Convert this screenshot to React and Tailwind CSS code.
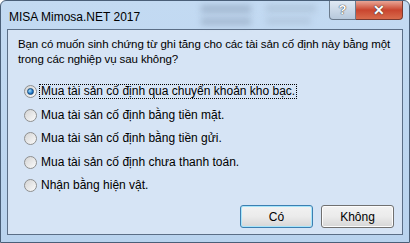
const options = [
  "Mua tài sản cố định qua chuyển khoản kho bạc.",
  "Mua tài sản cố định bằng tiền mặt.",
  "Mua tài sản cố định bằng tiền gửi.",
  "Mua tài sản cố định chưa thanh toán.",
  "Nhận bằng hiện vật.",
];

function Radio({ checked }) {
  return (
    <span className="w-[13px] h-[13px] rounded-full border border-[#8e8f8f] bg-gradient-to-br from-[#d4d4d4] to-[#fbfbfb] flex items-center justify-center shrink-0">
      {checked && (
        <span className="w-[7px] h-[7px] rounded-full bg-[radial-gradient(circle_at_35%_35%,#a6e2ff,#1f76c6_60%,#0b3f85)] border border-[#174b7d]" />
      )}
    </span>
  );
}

function Button({ children, focused }) {
  return (
    <button
      className={
        "w-[73px] h-[23px] rounded-[3px] text-[12px] text-black bg-gradient-to-b from-[#f2f2f2] via-[#ebebeb] to-[#d6d6d6] " +
        (focused
          ? "border border-[#3c7fb1] shadow-[inset_0_0_0_1px_#a6e5fb]"
          : "border border-[#707070] shadow-[inset_0_0_0_1px_#fcfcfc]")
      }
    >
      {children}
    </button>
  );
}

export default function App() {
  return (
    <div
      className="w-[410px] h-[243px] flex flex-col border border-[#4a5f78] rounded-t-[6px] bg-gradient-to-b from-[#c3daf2] to-[#b9d3ee] overflow-hidden relative"
      style={{ fontFamily: "'Liberation Sans', Arial, sans-serif" }}
    >
      {/* blurred background behind glass */}
      <div className="absolute left-[200px] top-[4px] w-[50px] h-[8px] bg-[#8fa3bb] blur-[3px] opacity-60" />
      <div className="absolute left-[265px] top-[4px] w-[50px] h-[7px] bg-[#9fb3c8] blur-[3px] opacity-50" />
      <div className="absolute left-[200px] top-[17px] w-[50px] h-[7px] bg-[#8fa3bb] blur-[3px] opacity-60" />
      <div className="absolute left-[265px] top-[17px] w-[45px] h-[6px] bg-[#9fb3c8] blur-[3px] opacity-50" />

      <div className="h-[28px] flex items-start relative">
        <div className="pl-[8px] pt-[7px] text-[12px] text-black">
          MISA Mimosa.NET 2017
        </div>
        <div className="ml-auto mr-[6px] flex h-[19px]">
          <div className="w-[27px] h-[19px] border border-[#6a7a8c] border-t-0 rounded-bl-[4px] bg-gradient-to-b from-[#dfe9f4] to-[#b7c9dc] flex items-center justify-center text-[13px] font-bold text-white [text-shadow:0_0_1px_#333,0_0_1px_#333]">
            ?
          </div>
          <div className="w-[47px] h-[19px] border border-[#7a3a30] border-t-0 border-l-0 rounded-br-[4px] bg-gradient-to-b from-[#e8a596] via-[#c9452f] to-[#d86b4c] flex items-center justify-center text-[14px] font-bold text-white [text-shadow:0_0_1px_#333,0_0_1px_#333]">
            ✕
          </div>
        </div>
      </div>

      <div className="mx-[6px] h-[206px] border border-[#5b6e86] bg-[#d6e4f5] flex flex-col text-[12px] text-black">
        <div className="pl-[10px] pt-[7px] leading-[15px] whitespace-nowrap text-[11.5px] tracking-[-0.1px]">
          Bạn có muốn sinh chứng từ ghi tăng cho các tài sản cố định này bằng một
          <br />
          trong các nghiệp vụ sau không?
        </div>
        <div className="flex flex-col gap-[8.5px] pl-[16px] pt-[17px]">
          {options.map((o, i) => (
            <div key={o} className="flex items-center h-[15px] gap-[2px]">
              <Radio checked={i === 0} />
              <span className={"px-[1px] leading-[13px] " + (i === 0 ? "border border-dotted border-black" : "border border-transparent")}>
                {o}
              </span>
            </div>
          ))}
        </div>
        <div className="mt-auto mb-[6px] flex justify-end gap-[8px] pr-[8px]">
          <Button focused>Có</Button>
          <Button>Không</Button>
        </div>
      </div>
    </div>
  );
}
